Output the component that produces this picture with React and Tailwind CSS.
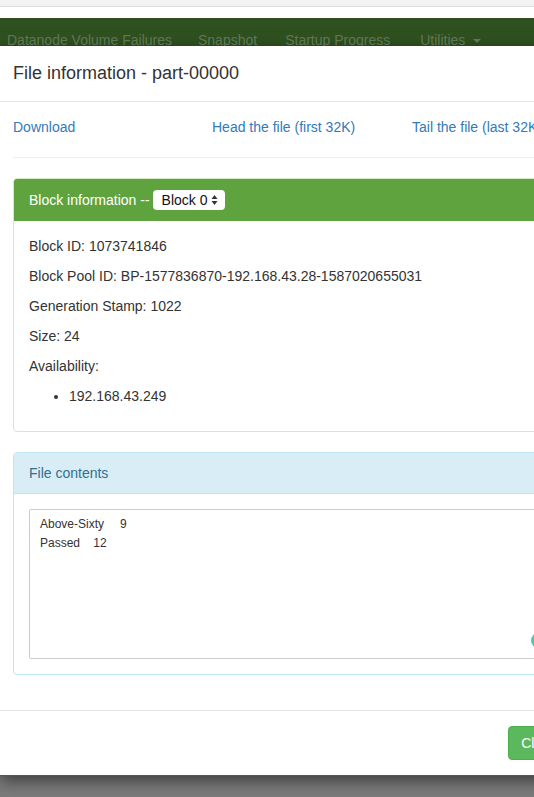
import React from 'react';

const navItems = [
  { label: 'Datanode Volume Failures', ml: 'ml-[7px]' },
  { label: 'Snapshot', ml: 'ml-[26px]' },
  { label: 'Startup Progress', ml: 'ml-[28px]' },
];

const blockInfo = [
  'Block ID: 1073741846',
  'Block Pool ID: BP-1577836870-192.168.43.28-1587020655031',
  'Generation Stamp: 1022',
  'Size: 24',
  'Availability:',
];

const App = () => {
  return (
    <div className="relative w-[534px] h-[797px] overflow-hidden bg-[#7b7b7b] font-['Liberation_Sans',Arial,sans-serif] text-[14px] text-[#333]">
      {/* page behind the backdrop */}
      <div className="h-[7px] bg-[#f1f2f4] border-b border-[#dcdcdc]" />
      <div className="h-[11px] bg-white" />
      <div className="h-[28px] bg-[#2f511f] overflow-hidden flex items-start pt-[12px] leading-[20px] text-[#5f7756] whitespace-nowrap">
        {navItems.map((item) => (
          <span key={item.label} className={item.ml}>{item.label}</span>
        ))}
        <span className="ml-[30px] flex items-center">
          Utilities
          <span className="ml-[8px] mt-[2px] w-0 h-0 border-l-[4px] border-r-[4px] border-t-[4px] border-l-transparent border-r-transparent border-t-[#5f7756]" />
        </span>
      </div>

      {/* modal */}
      <div className="w-[585px] bg-white shadow-[0_5px_15px_rgba(0,0,0,0.5)] border-b border-[#555]">
        <div className="px-[13px] py-[15px] border-b border-[#e5e5e5]">
          <h4 className="text-[18px] leading-[25px]">File information - part-00000</h4>
        </div>

        <div className="px-[13px] pt-[15px] pb-[15px]">
          <div className="grid grid-cols-[199px_200px_200px] leading-[20px] text-[#337ab7] whitespace-nowrap">
            <span>Download</span>
            <span>Head the file (first 32K)</span>
            <span>Tail the file (last 32K)</span>
          </div>
          <hr className="my-[20px] border-t border-[#eee]" />

          {/* Block information panel */}
          <div className="border border-[#d6e9c6] rounded-[4px] mb-[20px]">
            <div className="bg-[#5fa33e] text-white px-[15px] py-[10px] rounded-t-[3px] flex items-center leading-[22px]">
              <span>Block information --</span>
              <span className="ml-[3px] h-[20px] bg-white rounded-[4px] text-[#111] flex items-center pl-[9px] pr-[7px] leading-[20px]">
                Block 0
                <svg width="7" height="12" viewBox="0 0 7 12" className="ml-[3px]">
                  <path d="M3.5 1 L6.5 5 L0.5 5 Z" fill="#333" />
                  <path d="M3.5 11 L6.5 7 L0.5 7 Z" fill="#333" />
                </svg>
              </span>
            </div>
            <div className="p-[15px] leading-[20px]">
              {blockInfo.map((line) => (
                <p key={line} className="mb-[10px]">{line}</p>
              ))}
              <ul className="pl-[40px] list-disc mb-[10px]">
                <li>192.168.43.249</li>
              </ul>
            </div>
          </div>

          {/* File contents panel */}
          <div className="border border-[#bce8f1] rounded-[4px]">
            <div className="bg-[#d9edf7] text-[#31708f] px-[15px] py-[10px] leading-[20px] border-b border-[#bce8f1] rounded-t-[3px]">
              File contents
            </div>
            <div className="p-[15px]">
              <div className="h-[150px] border border-[#ccc] rounded-[2px] px-[10px] pt-[5px] text-[12px] leading-[19px] whitespace-pre [tab-size:8]">
                {'Above-Sixty\t9\nPassed\t12'}
              </div>
            </div>
          </div>
          <div className="h-[20px]" />
        </div>

        <div className="border-t border-[#e5e5e5] p-[15px] flex justify-end">
          <button className="h-[34px] px-[12px] bg-[#5cb85c] border border-[#4cae4c] rounded-[4px] text-white leading-[20px]">
            Close
          </button>
        </div>
      </div>

      {/* small floating badge at the textarea edge */}
      <div className="absolute left-[531px] top-[633px] w-[15px] h-[15px] rounded-full bg-[#55c4a2]" />
    </div>
  );
};

export default App;
